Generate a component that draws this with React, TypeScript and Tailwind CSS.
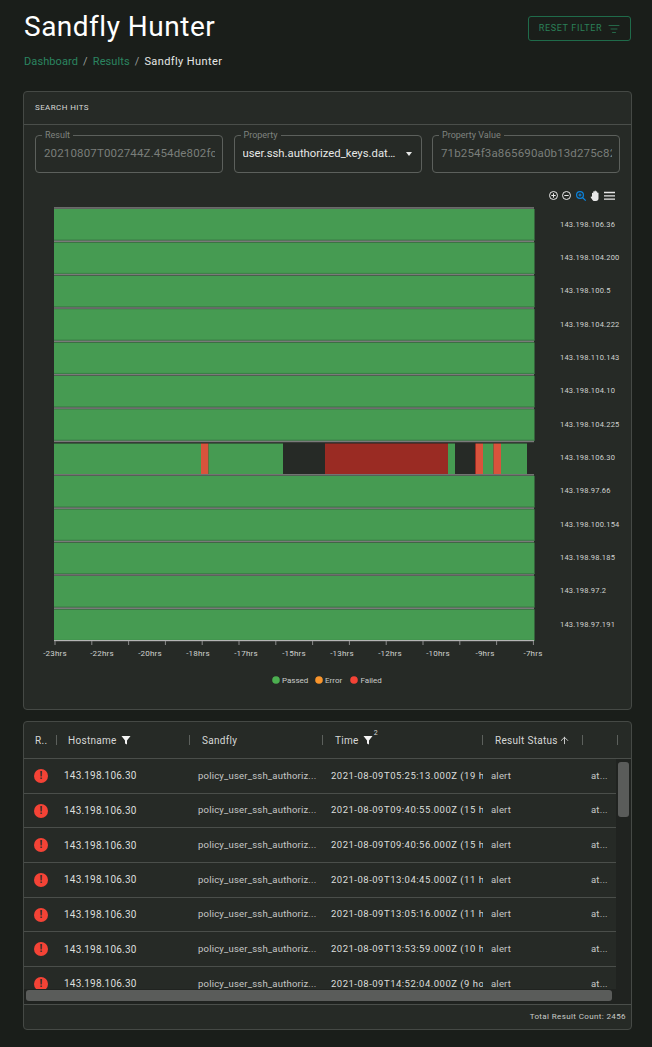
import { ListFilter, ArrowUp } from 'lucide-react';

const hosts = [
    '143.198.106.36',
    '143.198.104.200',
    '143.198.100.5',
    '143.198.104.222',
    '143.198.110.143',
    '143.198.104.10',
    '143.198.104.225',
    '143.198.106.30',
    '143.198.97.66',
    '143.198.100.154',
    '143.198.98.185',
    '143.198.97.2',
    '143.198.97.191',
];

const axis = [
    ['-23hrs', 55],
    ['-22hrs', 102],
    ['-20hrs', 150],
    ['-18hrs', 198],
    ['-17hrs', 246],
    ['-15hrs', 294],
    ['-13hrs', 342],
    ['-12hrs', 390],
    ['-10hrs', 438],
    ['-9hrs', 485],
    ['-7hrs', 533],
] as const;

// segments of the one row that is not all green
const segments = [
    [54, 201, '#469b52'],
    [201, 208.5, '#d9533c'],
    [208.5, 283, '#469b52'],
    [325, 448, '#9a2b23'],
    [448, 455, '#469b52'],
    [475, 476, '#9a2b23'],
    [476, 483, '#d9533c'],
    [483, 493.5, '#469b52'],
    [493.5, 501, '#d9533c'],
    [501, 527, '#469b52'],
] as const;

const rows = [
    '2021-08-09T05:25:13.000Z (19 hours ago)',
    '2021-08-09T09:40:55.000Z (15 hours ago)',
    '2021-08-09T09:40:56.000Z (15 hours ago)',
    '2021-08-09T13:04:45.000Z (11 hours ago)',
    '2021-08-09T13:05:16.000Z (11 hours ago)',
    '2021-08-09T13:53:59.000Z (10 hours ago)',
    '2021-08-09T14:52:04.000Z (9 hours ago)',
];

const PITCH = 33.36;

function Field({ label, value, select }: { label: string; value: string; select?: boolean }) {
    return (
        <div className="relative h-[38px] flex-1 min-w-0 rounded border border-[#5c605c] flex items-center pl-[8px] pr-[7px]">
            <span className="absolute -top-[6px] left-[6px] bg-[#262a26] px-[3px] text-[9px] leading-[11px] text-[#7f837f]">
                {label}
            </span>
            {select ? (
                <>
                    <span className="flex-1 truncate text-[11.3px] text-[#e6e8e6]">{value}</span>
                    <span className="ml-2 mr-[2px] w-0 h-0 border-x-[3px] border-x-transparent border-t-[4px] border-t-[#e6e8e6]" />
                </>
            ) : (
                <span className="flex-1 overflow-hidden whitespace-nowrap text-[11.5px] tracking-[0.15px] text-[#7a7e7a]">{value}</span>
            )}
        </div>
    );
}

function Chart() {
    return (
        <svg viewBox="24 182 607 527" className="block w-[607px] h-[527px]" fontFamily="Roboto, sans-serif">
            <g fill="none" stroke="#e8e8e8" strokeWidth="1">
                <circle cx="553.5" cy="195.5" r="4" />
                <path d="M551.3 195.5h4.4M553.5 193.3v4.4" />
                <circle cx="566.5" cy="195.5" r="4" />
                <path d="M564.3 195.5h4.4" />
            </g>
            <g fill="none" stroke="#0a84e0" strokeWidth="1.2">
                <circle cx="580" cy="195" r="3.4" />
                <path d="M582.5 197.5l3.2 3.2M578.4 195h3.2M580 193.4v3.2" />
            </g>
            <path
                d="M592 197v-3.5c0-.9 1.2-.9 1.2 0v-1.7c0-.9 1.3-.9 1.3 0v-.6c0-.9 1.4-.9 1.4 0v.6c0-.9 1.3-.9 1.3 0v1.3c0-.8 1.3-.8 1.3 0v5.400c0 1.500-1 2.500-2.500 2.500h-1.500c-1 0-1.700-.5-2.200-1.300l-1.500-2.300c-.4-.7.5-1.300 1-.7z"
                fill="#e8e8e8"
            />
            <path d="M604 192.500h11M604 195.800h11M604 199.100h11" stroke="#e8e8e8" strokeWidth="1.300" />

            {Array.from({ length: 13 }, (_, i) => {
                const y = 209 + PITCH * i;
                return (
                    <g key={i}>
                        <rect x="54" y={y - 1.8} width="480" height="1.500" fill="#7a7a7a" />
                        {i === 7 ? (
                            segments.map(([a, b, c]) => <rect key={a} x={a} y={y + 1} width={b - a} height={30.500} fill={c} />)
                        ) : (
                            <>
                                <rect x="54" y={y} width="480.500" height={31.500} fill="#469b52" />
                                <rect x="54" y={y + 30.500} width="480.500" height="1" fill="#3a7f46" />
                            </>
                        )}
                        <text x="560" y={y + 17.500} fontSize="7.500" letterSpacing="0.2" fill="#d0d2d0">
                            {hosts[i]}
                        </text>
                    </g>
                );
            })}
            <rect x="54" y="640" width="480" height="1.200" fill="#b5b5b5" />
            {Array.from({ length: 14 }, (_, i) => (
                <rect key={i} x={54.500 + 36.800 * i} y="641" width="1" height="4" fill="#8a8a8a" />
            ))}
            {axis.map(([label, x]) => (
                <text key={label} x={x} y="656" fontSize="8" textAnchor="middle" letterSpacing="0.2" fill="#d0d2d0">
                    {label}
                </text>
            ))}
            <circle cx="276" cy="680" r="3.800" fill="#4caf50" />
            <text x="282" y="683" fontSize="8" fill="#c8cac8">Passed</text>
            <circle cx="319" cy="680" r="3.800" fill="#f9952c" />
            <text x="325" y="683" fontSize="8" fill="#c8cac8">Error</text>
            <circle cx="354" cy="680" r="3.800" fill="#f44336" />
            <text x="360.500" y="683" fontSize="8" fill="#c8cac8">Failed</text>
        </svg>
    );
}

function Funnel() {
    return (
        <svg width="10" height="10" viewBox="0 0 10 10" className="ml-[4px] shrink-0">
            <path d="M.5 1h9L6 5.400V9.500L4 8.500V5.400z" fill="#f4f4f4" />
        </svg>
    );
}

function AlertIcon() {
    return (
        <span className="w-[14px] h-[14px] rounded-full bg-[#f44336] flex items-center justify-center text-[10px] leading-none font-bold text-[#262a26]">
            !
        </span>
    );
}

const Sep = () => <span className="absolute right-0 top-[13px] h-[10px] w-[1px] bg-[#5c605c]" />;

function Results() {
    return (
        <section className="mt-[11px] ml-[23px] w-[609px] h-[309px] rounded border border-[#454945] bg-[#262a26] flex flex-col overflow-hidden">
            <div className="h-[37px] shrink-0 flex border-b border-[#4a4e4a] text-[10px] text-[#d6d8d6] tracking-[0.3px]">
                <div className="relative w-[33px] pl-[11px] flex items-center">R..<Sep /></div>
                <div className="relative w-[133px] pl-[11px] flex items-center">Hostname<Funnel /><Sep /></div>
                <div className="relative w-[133px] pl-[12px] flex items-center">Sandfly<Sep /></div>
                <div className="relative w-[160px] pl-[12px] flex items-center">
                    Time<Funnel />
                    <span className="ml-[1px] -mt-[14px] text-[7px]">2</span>
                    <Sep />
                </div>
                <div className="relative w-[100px] pl-[12px] flex items-center">
                    Result Status<ArrowUp size={11} strokeWidth={2} className="ml-[1px]" />
                    <Sep />
                </div>
                <div className="relative w-[35px]"><Sep /></div>
            </div>
            <div className="flex-1 min-h-0 flex overflow-hidden">
                <div className="w-[592px] shrink-0 h-[231px] overflow-hidden">
                    {rows.map((time, i) => (
                        <div key={i} className="h-[34.700px] flex items-center border-b border-[#4a4e4a] text-[9.500px] tracking-[0.2px] text-[#dcdedc] whitespace-nowrap">
                            <div className="w-[33px] pl-[10px]"><AlertIcon /></div>
                            <div className="w-[133px] pl-[7px] text-[10px]">143.198.106.30</div>
                            <div className="w-[133px] pl-[8px] text-[#c6c8c6]">policy_user_ssh_authoriz...</div>
                            <div className="w-[160px] pl-[8px] overflow-hidden tracking-[0.5px]">{time}</div>
                            <div className="w-[100px] pl-[8px] text-[#c6c8c6]">alert</div>
                            <div className="pl-[8px] text-[#c6c8c6]">at...</div>
                        </div>
                    ))}
                </div>
                <div className="flex-1 bg-[#202320] pt-[3px] pl-[2px]">
                    <div className="w-[11px] h-[55px] rounded-[3px] bg-[#5a5c5a]" />
                </div>
            </div>
            <div className="h-[15px] shrink-0 bg-[#202320] pl-[2px] pt-[1px]">
                <div className="w-[586px] h-[11px] rounded-[3px] bg-[#5a5c5a]" />
            </div>
            <div className="h-[25px] shrink-0 border-t border-[#4a4e4a] flex items-center justify-end pr-[5px] text-[8px] tracking-[0.38px] text-[#c8cac8]">
                Total Result Count: 2456
            </div>
        </section>
    );
}

export default function App() {
    return (
        <div className="w-[652px] h-[1047px] overflow-hidden bg-[#1a1e1a] text-white font-['Roboto',sans-serif]">
            <header className="flex justify-between pl-[24px] pr-[21px] pt-[9px]">
                <h1 className="text-[28px] leading-[36px] tracking-[0.5px] font-normal">Sandfly Hunter</h1>
                <button
                    type="button"
                    className="mt-[7px] w-[103px] h-[25px] rounded-[3px] border border-[#1f6b4a] flex items-center justify-center gap-[6px] text-[9px] tracking-[0.65px] text-[#2a8058]"
                >
                    RESET FILTER
                    <ListFilter size={12} strokeWidth={1.500} />
                </button>
            </header>
            <nav className="pl-[24px] mt-[10px] h-[14px] flex items-center gap-[5px] text-[11px] tracking-[0.1px]">
                <span className="text-[#2b8560]">Dashboard</span>
                <span className="text-[#9a9e9a]">/</span>
                <span className="text-[#2b8560]">Results</span>
                <span className="text-[#9a9e9a]">/</span>
                <span className="text-[#e6e8e6] tracking-[0.4px]">Sandfly Hunter</span>
            </nav>
            <section className="mt-[22px] ml-[23px] w-[609px] h-[619px] rounded border border-[#454945] bg-[#262a26] overflow-hidden">
                <div className="h-[33px] border-b border-[#4a4e4a] pl-[11px] flex items-center text-[8px] tracking-[0.4px] text-[#d6d8d6]">
                    SEARCH HITS
                </div>
                <div className="flex gap-[10.500px] pl-[11px] pr-[11px] pt-[10px]">
                    <Field label="Result" value="20210807T002744Z.454de802fc8a7c1b" />
                    <Field label="Property" value="user.ssh.authorized_keys.data..." select />
                    <Field label="Property Value" value="71b254f3a865690a0b13d275c82" />
                </div>
                <div className="mt-[9px]">
                    <Chart />
                </div>
            </section>
            <Results />
        </div>
    );
}
